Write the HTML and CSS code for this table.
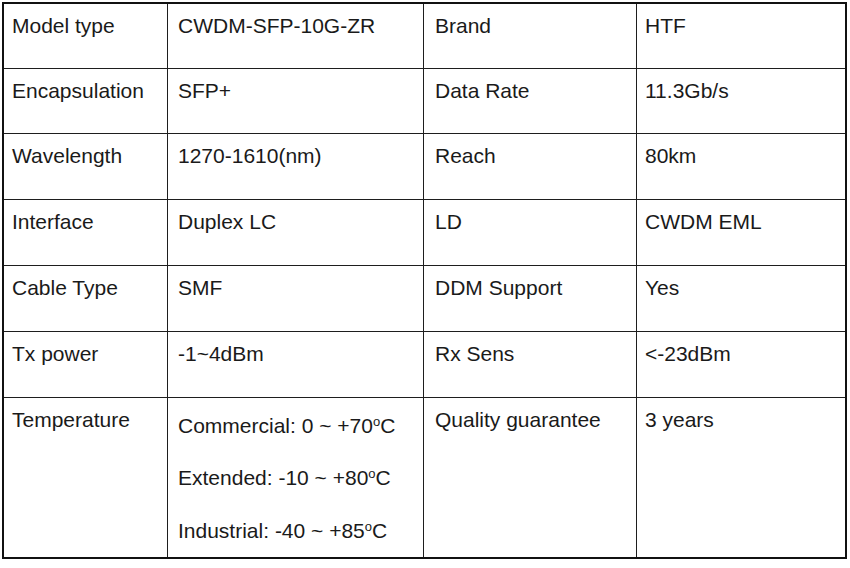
FILE: index.html
```html
<!DOCTYPE html>
<html>
<head>
<meta charset="utf-8">
<link rel="stylesheet" href="styles.css">
</head>
<body>
<div class="spec">
  <div class="c c1">Model type</div><div class="c c2">CWDM-SFP-10G-ZR</div><div class="c c3">Brand</div><div class="c c4">HTF</div>
  <div class="c c1">Encapsulation</div><div class="c c2">SFP+</div><div class="c c3">Data Rate</div><div class="c c4">11.3Gb/s</div>
  <div class="c c1">Wavelength</div><div class="c c2">1270-1610(nm)</div><div class="c c3">Reach</div><div class="c c4">80km</div>
  <div class="c c1">Interface</div><div class="c c2">Duplex LC</div><div class="c c3">LD</div><div class="c c4">CWDM EML</div>
  <div class="c c1">Cable Type</div><div class="c c2">SMF</div><div class="c c3">DDM Support</div><div class="c c4">Yes</div>
  <div class="c c1">Tx power</div><div class="c c2">-1~4dBm</div><div class="c c3">Rx Sens</div><div class="c c4">&lt;-23dBm</div>
  <div class="c c1">Temperature</div>
  <div class="c c2 temps">
    <div class="tline">Commercial: 0 ~ +70<sup class="deg">o</sup>C</div>
    <div class="tline">Extended: -10 ~ +80<sup class="deg">o</sup>C</div>
    <div class="tline">Industrial: -40 ~ +85<sup class="deg">o</sup>C</div>
  </div>
  <div class="c c3">Quality guarantee</div><div class="c c4">3 years</div>
</div>
</body>
</html>
```
FILE: styles.css
```css
html, body {
  margin: 0;
  padding: 0;
  background: #ffffff;
}
body {
  padding: 2px 0 0 2px;
}
.spec {
  display: grid;
  grid-template-columns: 163px 255px 212px 208px;
  grid-template-rows: 64px 64px 65px 65px 65px 65px 159px;
  gap: 1px;
  width: max-content;
  background: #1e1e1e;
  border: 2px solid #111111;
  font-family: "Liberation Sans", Arial, sans-serif;
  font-size: 21px;
  line-height: 24px;
  color: #1a1a1a;
}
.c {
  background: #ffffff;
  padding-top: 10px;
  white-space: nowrap;
}
.c1 { padding-left: 8px; }
.c2 { padding-left: 10px; }
.c3 { padding-left: 11px; }
.c4 { padding-left: 8px; }
.temps {
  display: flex;
  flex-direction: column;
  gap: 28.5px;
  padding-top: 15.5px;
}
.deg {
  font-size: 13px;
  line-height: 0;
  vertical-align: 7px;
}
```
